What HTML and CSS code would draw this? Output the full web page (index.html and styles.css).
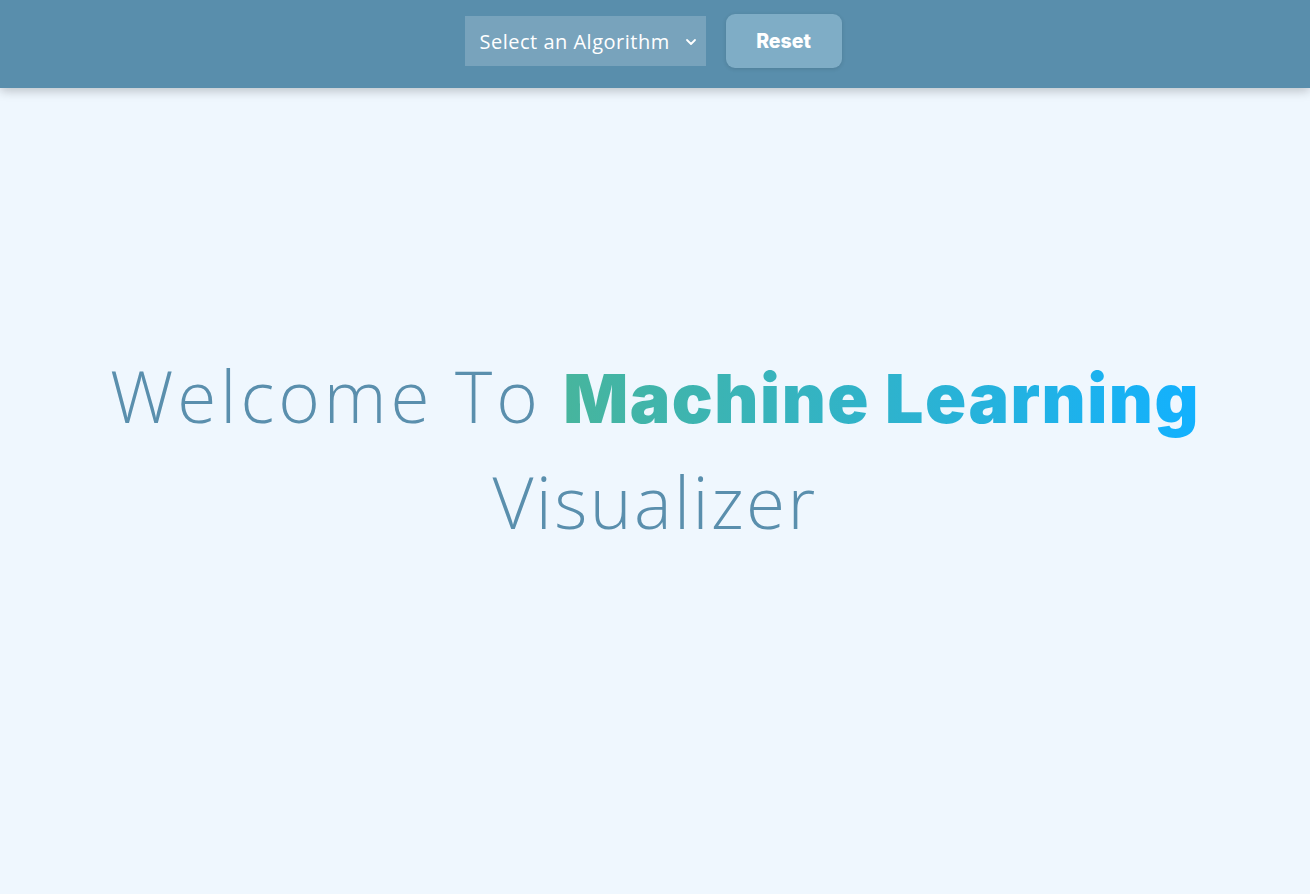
FILE: index.html
```html
<!DOCTYPE html>
<html lang="en">
<head>
<meta charset="utf-8">
<title>Machine Learning Visualizer</title>
<link rel="stylesheet" href="styles.css">
</head>
<body>
<header class="topbar">
  <div class="select-wrap">
    <span class="select-label">Select an Algorithm</span>
    <svg class="chev" width="12" height="8" viewBox="0 0 12 8"><path d="M2 2 L6 6 L10 2" fill="none" stroke="#fff" stroke-width="1.8" stroke-linecap="round" stroke-linejoin="round"/></svg>
  </div>
  <button class="reset">Reset</button>
</header>
<main class="hero">
  <h1 class="title"><span class="lead">Welcome To </span><span class="grad">Machine Learning</span><br>Visualizer</h1>
</main>
</body>
</html>
```
FILE: styles.css
```css
* { box-sizing: border-box; }
html, body { margin: 0; height: 100%; }
body {
  background: #eff7fe;
  font-family: "Open Sans", "Lato", sans-serif;
  display: flex;
  flex-direction: column;
}
.topbar {
  height: 88px;
  background: #598eac;
  display: flex;
  align-items: center;
  justify-content: center;
  gap: 20px;
  padding-bottom: 6px;
  padding-right: 4px;
  box-shadow: 0 3px 10px rgba(0, 0, 0, 0.22);
  position: relative;
  z-index: 1;
}
.select-wrap {
  width: 241px;
  height: 50px;
  background: #78a3bc;
  display: flex;
  align-items: center;
  justify-content: space-between;
  padding: 0 9px 0 15px;
  color: #fff;
  font-size: 20px;
  font-weight: 400;
  letter-spacing: 0.5px;
}
.chev { margin-top: 2px; }
.reset {
  width: 116px;
  height: 54px;
  border: none;
  border-radius: 9px;
  background: #7fadc6;
  color: #fff;
  font-family: "Inter", sans-serif;
  font-size: 19.5px;
  font-weight: 800;
  box-shadow: 0 1px 4px rgba(0,0,0,0.12);
}
.hero {
  flex: 1;
  display: flex;
  align-items: center;
  justify-content: center;
  padding-bottom: 84px;
}
.title {
  margin: 0;
  text-align: center;
  color: #5a8fad;
  font-size: 71px;
  font-weight: 300;
  line-height: 104px;
  letter-spacing: 2.4px;
}
.lead {
  letter-spacing: 4px;
  word-spacing: -1px;
}
.grad {
  font-family: "Inter", sans-serif;
  font-size: 68px;
  font-weight: 900;
  letter-spacing: 1.5px;
  word-spacing: 0;
  background: linear-gradient(90deg, #47b59d 0%, #2fb3cc 50%, #12b1ff 100%);
  -webkit-background-clip: text;
  background-clip: text;
  color: transparent;
}
```
